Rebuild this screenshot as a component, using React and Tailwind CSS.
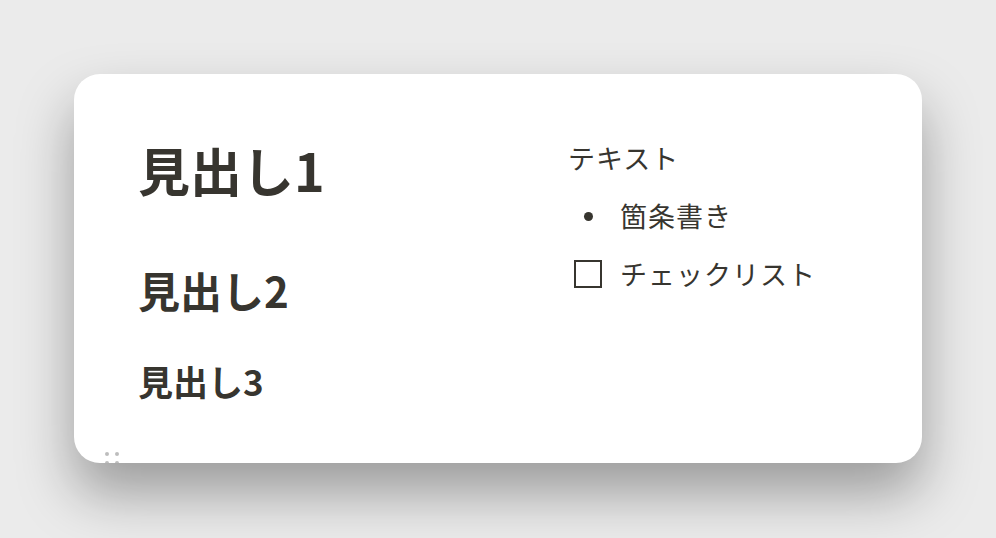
import React from "react";

export default function App() {
  const font = { fontFamily: '"Noto Sans CJK JP", "Noto Sans", sans-serif' };
  return (
    <div className="w-[996px] h-[538px] bg-[#ebebeb] overflow-hidden pt-[74px] pl-[74px]" style={font}>
      <div className="relative w-[848px] h-[389px] bg-white rounded-[26px] overflow-hidden shadow-[0_30px_55px_rgba(0,0,0,0.34)] flex text-[#37352f]">
        <div className="w-[494px] pl-[64px] pt-[60px] flex flex-col">
          <div className="text-[52px] font-bold leading-[72px]">見出し1</div>
          <div className="text-[42px] font-bold leading-[56px] mt-[56px]">見出し2</div>
          <div className="text-[35px] font-bold leading-[48px] mt-[39px]">見出し3</div>
        </div>
        <div className="pt-[66px] flex flex-col text-[27px] tracking-[1px]">
          <div className="leading-[36px]">テキスト</div>
          <div className="flex items-center mt-[22px] leading-[36px]">
            <div className="w-[52px] flex pl-[16px]">
              <div className="w-[9px] h-[9px] rounded-full bg-[#37352f]" />
            </div>
            <span>箇条書き</span>
          </div>
          <div className="flex items-center mt-[22px] leading-[36px]">
            <div className="w-[52px] flex pl-[6px]">
              <div className="w-[28px] h-[28px] border-2 border-[#37352f]" />
            </div>
            <span>チェックリスト</span>
          </div>
        </div>
        <div className="absolute left-[31px] top-[378px] grid grid-cols-2 gap-x-[6px] gap-y-[5px]">
          <div className="w-[4px] h-[4px] rounded-full bg-[#bdbdbd]" />
          <div className="w-[4px] h-[4px] rounded-full bg-[#bdbdbd]" />
          <div className="w-[4px] h-[4px] rounded-full bg-[#bdbdbd]" />
          <div className="w-[4px] h-[4px] rounded-full bg-[#bdbdbd]" />
          <div className="w-[4px] h-[4px] rounded-full bg-[#bdbdbd]" />
          <div className="w-[4px] h-[4px] rounded-full bg-[#bdbdbd]" />
        </div>
      </div>
    </div>
  );
}
